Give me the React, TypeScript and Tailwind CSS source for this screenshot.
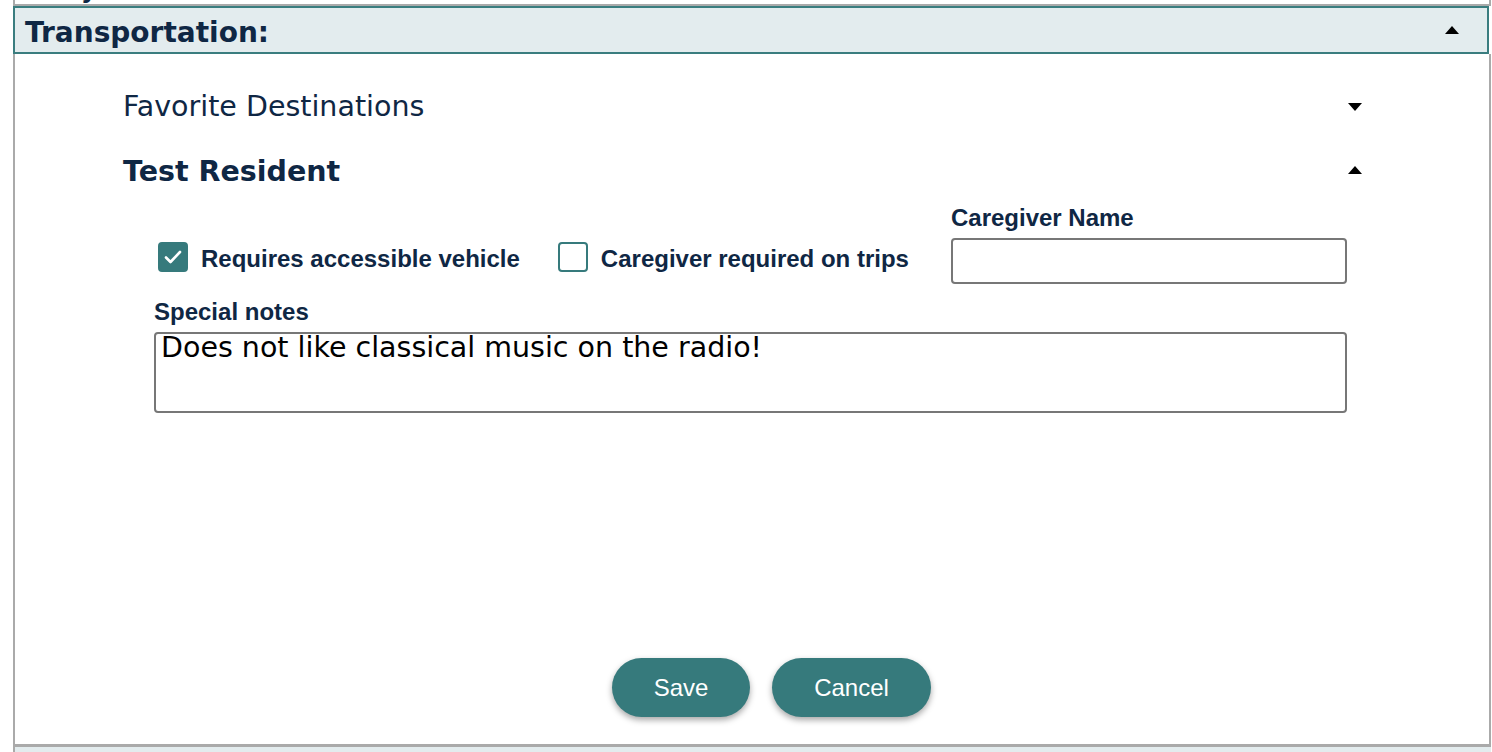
import { useState } from "react";

const navy = "text-[#0f2744]";

function Caret({ up }: { up?: boolean }) {
  return (
    <svg width="14" height="8" viewBox="0 0 14 8" className="block">
      {up ? <path d="M7 0 L14 8 L0 8 Z" fill="#000" /> : <path d="M0 0 L14 0 L7 8 Z" fill="#000" />}
    </svg>
  );
}

function Check({ checked, onClick }: { checked: boolean; onClick: () => void }) {
  return (
    <button
      onClick={onClick}
      className={`w-[30px] h-[30px] rounded-[4px] border-2 border-[#367a7c] flex items-center justify-center ${
        checked ? "bg-[#367a7c]" : "bg-white"
      }`}
    >
      {checked && (
        <svg width="18" height="14" viewBox="0 0 18 14">
          <path d="M2 7.5 L6.5 12 L16 2" stroke="#fff" strokeWidth="2.6" fill="none" strokeLinecap="round" strokeLinejoin="round" />
        </svg>
      )}
    </button>
  );
}

export default function App() {
  const [accessible, setAccessible] = useState(true);
  const [caregiver, setCaregiver] = useState(false);
  const [name, setName] = useState("");
  const [notes, setNotes] = useState("Does not like classical music on the radio!");

  return (
    <div className="w-[1492px] h-[752px] bg-white overflow-hidden font-['DejaVu_Sans',sans-serif]">
      <div className="ml-[13px] w-[1478px] bg-white">
        {/* tail of the section above */}
        <div className="h-[4px] overflow-hidden border-x-2 border-[#aaaaaa]">
          <div className={`-mt-[22px] pl-[66px] text-[24px] font-bold leading-[24px] ${navy}`}>y</div>
        </div>
        <div className="h-[2px] bg-[#aaaaaa]" />

        {/* Transportation header */}
        <div className="w-[1476px] h-[48px] bg-[#e3ecee] border-2 border-[#3a7d7f] flex items-center justify-between pl-[10px] pr-[28px]">
          <h2 className={`text-[28px] font-bold leading-[32px] pt-[5px] ${navy}`}>Transportation:</h2>
          <Caret up />
        </div>

        <div className="h-[693px] border-x-2 border-b-[3px] border-[#aaaaaa] flex flex-col">
          <div className="pl-[108px] pr-[127px]">
            <div className="h-[62px] mt-[22px] flex items-center justify-between">
              <span className={`text-[28.5px] leading-[34px] ${navy}`}>Favorite Destinations</span>
              <Caret />
            </div>
            <div className="h-[64px] flex items-center justify-between">
              <span className={`text-[28.5px] font-bold leading-[34px] pt-[3px] ${navy}`}>Test Resident</span>
              <Caret up />
            </div>
          </div>

          <div className="mt-[2px] pl-[139px] pr-[142px] font-['Liberation_Sans',Arial,sans-serif]">
            <div className="flex items-end">
              <label className="flex items-center h-[46px] mb-[4px] ml-[4px]">
                <Check checked={accessible} onClick={() => setAccessible(!accessible)} />
                <span className={`ml-[13px] text-[24px] font-bold pt-[4px] ${navy}`}>Requires accessible vehicle</span>
              </label>
              <label className="flex items-center h-[46px] mb-[4px] ml-[38px]">
                <Check checked={caregiver} onClick={() => setCaregiver(!caregiver)} />
                <span className={`ml-[13px] text-[24px] font-bold pt-[4px] ${navy}`}>Caregiver required on trips</span>
              </label>
              <div className="ml-[42px] flex-1 flex flex-col">
                <span className={`text-[24px] font-bold leading-[28px] ${navy}`}>Caregiver Name</span>
                <input
                  value={name}
                  onChange={(e) => setName(e.target.value)}
                  className="mt-[6px] h-[46px] w-full border-2 border-[#777777] rounded-[4px] px-2 outline-none"
                />
              </div>
            </div>

            <div className={`mt-[14px] text-[24px] font-bold leading-[28px] ${navy}`}>Special notes</div>
            <textarea
              value={notes}
              onChange={(e) => setNotes(e.target.value)}
              className="block mt-[6px] w-full h-[81px] border-2 border-[#777777] rounded-[4px] px-[5px] py-0 text-[28.5px] leading-[28px] text-black resize-none outline-none font-['DejaVu_Sans',sans-serif]"
            />
          </div>

          <div className="mt-auto mb-[27px] flex justify-center gap-[22px] pl-[39px] font-['Liberation_Sans',Arial,sans-serif]">
            <button className="w-[138px] h-[59px] rounded-full bg-[#367a7c] text-white text-[24px] shadow-[0_3px_6px_rgba(0,0,0,0.35)]">
              Save
            </button>
            <button className="w-[159px] h-[59px] rounded-full bg-[#367a7c] text-white text-[24px] shadow-[0_3px_6px_rgba(0,0,0,0.35)]">
              Cancel
            </button>
          </div>
        </div>

        {/* top of the next section */}
        <div className="h-[10px] border-l-2 border-[#aaaaaa] bg-[#e3ecee]" />
      </div>
    </div>
  );
}
